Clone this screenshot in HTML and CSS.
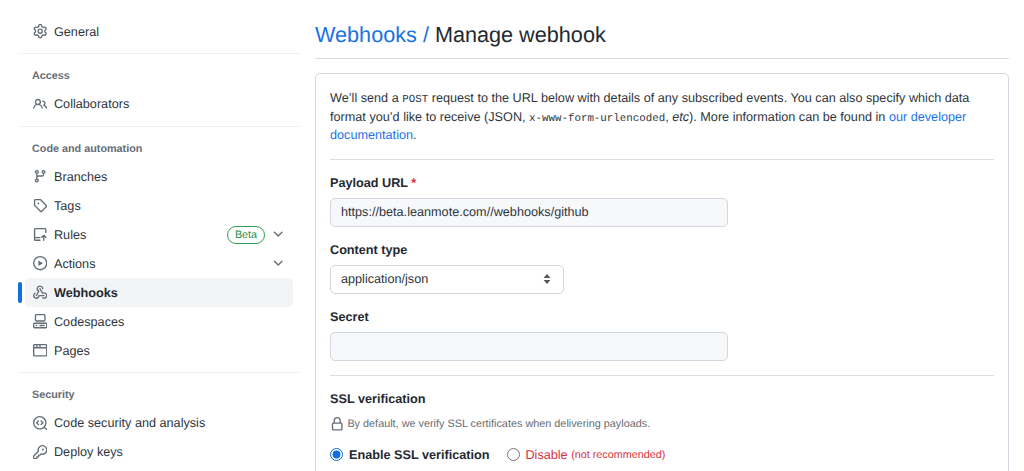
FILE: index.html
```html
<!DOCTYPE html>
<html lang="en">
<head>
<meta charset="utf-8">
<title>Manage webhook</title>
<link rel="stylesheet" href="styles.css">
</head>
<body>
<div class="page">
  <nav class="sidebar">
    <a class="item"><svg class="icon" viewBox="0 0 16 16"><path d="M8 0a8.2 8.2 0 0 1 .701.031C9.444.095 9.99.645 10.16 1.29l.288 1.107c.018.066.079.158.212.224.231.114.454.243.668.386.123.082.233.09.299.071l1.103-.303c.644-.176 1.392.021 1.82.63.27.385.506.792.704 1.218.315.675.111 1.422-.364 1.891l-.814.806c-.049.048-.098.147-.088.294.016.257.016.515 0 .772-.01.147.038.246.088.294l.814.806c.475.469.679 1.216.364 1.891a7.977 7.977 0 0 1-.704 1.217c-.428.61-1.176.807-1.82.63l-1.102-.302c-.067-.019-.177-.011-.3.071a5.909 5.909 0 0 1-.668.386c-.133.066-.194.158-.211.224l-.29 1.106c-.168.646-.715 1.196-1.458 1.26a8.006 8.006 0 0 1-1.402 0c-.743-.064-1.289-.614-1.458-1.26l-.289-1.106c-.018-.066-.079-.158-.212-.224a5.738 5.738 0 0 1-.668-.386c-.123-.082-.233-.09-.299-.071l-1.103.303c-.644.176-1.392-.021-1.82-.63a8.12 8.12 0 0 1-.704-1.218c-.315-.675-.111-1.422.363-1.891l.815-.806c.05-.048.098-.147.088-.294a6.214 6.214 0 0 1 0-.772c.01-.147-.038-.246-.088-.294l-.815-.806C.635 6.045.431 5.298.746 4.623a7.92 7.92 0 0 1 .704-1.217c.428-.61 1.176-.807 1.82-.63l1.102.302c.067.019.177.011.3-.071.214-.143.437-.272.668-.386.133-.066.194-.158.211-.224l.29-1.106C6.009.645 6.556.095 7.299.03 7.53.01 7.764 0 8 0Zm-.571 1.525c-.036.003-.108.036-.137.146l-.289 1.105c-.147.561-.549.967-.998 1.189-.173.086-.34.183-.5.29-.417.278-.97.423-1.529.27l-1.103-.303c-.109-.03-.175.016-.195.045-.22.312-.412.644-.573.99-.014.031-.021.11.059.19l.815.806c.411.406.562.957.53 1.456a4.709 4.709 0 0 0 0 .582c.032.499-.119 1.05-.53 1.456l-.815.806c-.081.08-.073.159-.059.19.162.346.353.677.573.989.02.03.085.076.195.046l1.102-.303c.56-.153 1.113-.008 1.53.27.161.107.328.204.501.29.447.222.85.629.997 1.189l.289 1.105c.029.109.101.143.137.146a6.6 6.6 0 0 0 1.142 0c.036-.003.108-.036.137-.146l.289-1.105c.147-.561.549-.967.998-1.189.173-.086.34-.183.5-.29.417-.278.97-.423 1.529-.27l1.103.303c.109.029.175-.016.195-.045.22-.313.411-.644.573-.99.014-.031.021-.11-.059-.19l-.815-.806c-.411-.406-.562-.957-.53-1.456a4.709 4.709 0 0 0 0-.582c-.032-.499.119-1.05.53-1.456l.815-.806c.081-.08.073-.159.059-.19a6.464 6.464 0 0 0-.573-.989c-.02-.03-.085-.076-.195-.046l-1.102.303c-.56.153-1.113.008-1.53-.27a4.44 4.44 0 0 0-.501-.29c-.447-.222-.85-.629-.997-1.189l-.289-1.105c-.029-.11-.101-.143-.137-.146a6.6 6.6 0 0 0-1.142 0ZM11 8a3 3 0 1 1-6 0 3 3 0 0 1 6 0ZM9.5 8a1.5 1.5 0 1 0-3.001.001A1.5 1.5 0 0 0 9.5 8Z"/></svg><span>General</span></a>
    <hr class="rule">
    <h3 class="group">Access</h3>
    <a class="item"><svg class="icon" viewBox="0 0 16 16"><path d="M2 5.5a3.5 3.5 0 1 1 5.898 2.549 5.508 5.508 0 0 1 3.034 4.084.75.75 0 1 1-1.482.235 4 4 0 0 0-7.9 0 .75.75 0 0 1-1.482-.236A5.507 5.507 0 0 1 3.102 8.05 3.493 3.493 0 0 1 2 5.5ZM11 4a3.001 3.001 0 0 1 2.22 5.018 5.01 5.01 0 0 1 2.56 3.012.749.749 0 0 1-.885.954.752.752 0 0 1-.549-.514 3.507 3.507 0 0 0-2.522-2.372.75.75 0 0 1-.574-.73v-.352a.75.75 0 0 1 .416-.672A1.5 1.5 0 0 0 11 5.5.75.75 0 0 1 11 4Zm-5.5-.5a2 2 0 1 0-.001 3.999A2 2 0 0 0 5.5 3.5Z"/></svg><span>Collaborators</span></a>
    <hr class="rule">
    <h3 class="group">Code and automation</h3>
    <a class="item"><svg class="icon" viewBox="0 0 16 16"><path d="M9.5 3.25a2.25 2.25 0 1 1 3 2.122V6A2.5 2.5 0 0 1 10 8.5H6a1 1 0 0 0-1 1v1.128a2.251 2.251 0 1 1-1.5 0V5.372a2.25 2.25 0 1 1 1.5 0v1.836A2.493 2.493 0 0 1 6 7h4a1 1 0 0 0 1-1v-.628A2.25 2.25 0 0 1 9.5 3.25Zm-6 0a.75.75 0 1 0 1.5 0 .75.75 0 0 0-1.5 0Zm8.25-.75a.75.75 0 1 0 0 1.5.75.75 0 0 0 0-1.5ZM4.25 12a.75.75 0 1 0 0 1.5.75.75 0 0 0 0-1.5Z"/></svg><span>Branches</span></a>
    <a class="item"><svg class="icon" viewBox="0 0 16 16"><path d="M1 7.775V2.75C1 1.784 1.784 1 2.75 1h5.025c.464 0 .91.184 1.238.513l6.25 6.25a1.75 1.75 0 0 1 0 2.474l-5.026 5.026a1.75 1.75 0 0 1-2.474 0l-6.25-6.25A1.75 1.75 0 0 1 1 7.775Zm1.5 0c0 .066.026.13.073.177l6.25 6.25a.25.25 0 0 0 .354 0l5.025-5.025a.25.25 0 0 0 0-.354l-6.25-6.25a.25.25 0 0 0-.177-.073H2.75a.25.25 0 0 0-.25.25ZM6 5a1 1 0 1 1 0 2 1 1 0 0 1 0-2Z"/></svg><span>Tags</span></a>
    <a class="item"><svg class="icon" viewBox="0 0 16 16"><path d="M1 2.75C1 1.784 1.784 1 2.75 1h10.5c.966 0 1.75.784 1.75 1.75v3.5a.75.75 0 0 1-1.5 0v-3.5a.25.25 0 0 0-.25-.25H2.5v8.5h5.25a.75.75 0 0 1 0 1.5H2.5v1.25c0 .138.112.25.25.25h5a.75.75 0 0 1 0 1.5h-5A1.75 1.75 0 0 1 1 13.25Z"/><path d="M12 8.5a.75.75 0 0 1 .53.22l2.25 2.25a.75.75 0 0 1-1.06 1.06l-.97-.97v3.69a.75.75 0 0 1-1.5 0v-3.69l-.97.97a.75.75 0 0 1-1.06-1.06l2.25-2.25A.75.75 0 0 1 12 8.5Z"/></svg><span>Rules</span><span class="badge">Beta</span><svg class="chev" viewBox="0 0 16 16"><path d="M12.78 5.22a.749.749 0 0 1 0 1.06l-4.25 4.25a.749.749 0 0 1-1.06 0L3.22 6.28a.749.749 0 1 1 1.06-1.06L8 8.939l3.72-3.719a.749.749 0 0 1 1.06 0Z"/></svg></a>
    <a class="item"><svg class="icon" viewBox="0 0 16 16"><path d="M8 0a8 8 0 1 1 0 16A8 8 0 0 1 8 0ZM1.5 8a6.5 6.5 0 1 0 13 0 6.5 6.5 0 0 0-13 0Zm4.879-2.773 4.264 2.559a.25.25 0 0 1 0 .428l-4.264 2.559A.25.25 0 0 1 6 10.559V5.442a.25.25 0 0 1 .379-.215Z"/></svg><span>Actions</span><svg class="chev push" viewBox="0 0 16 16"><path d="M12.78 5.22a.749.749 0 0 1 0 1.06l-4.25 4.25a.749.749 0 0 1-1.06 0L3.22 6.28a.749.749 0 1 1 1.06-1.06L8 8.939l3.72-3.719a.749.749 0 0 1 1.06 0Z"/></svg></a>
    <a class="item active"><svg class="icon" viewBox="0 0 16 16"><path d="M5.5 4.25a2.25 2.25 0 0 1 4.5 0 .75.75 0 0 0 1.5 0 3.75 3.75 0 1 0-6.14 2.889l-2.272 4.258a.75.75 0 0 0 1.324.706L7 7.25a.75.75 0 0 0-.309-1.015A2.25 2.25 0 0 1 5.5 4.25Z"/><path d="M7.364 3.607a.75.75 0 0 1 1.03.257l2.608 4.349a3.75 3.75 0 1 1-.628 6.785.75.75 0 0 1 .752-1.299 2.25 2.25 0 1 0-.033-3.88.75.75 0 0 1-1.03-.256L7.107 4.636a.75.75 0 0 1 .257-1.03Z"/><path d="M2.9 8.776A.75.75 0 0 1 2.625 9.8 2.25 2.25 0 1 0 6 11.75a.75.75 0 0 1 .75-.751h5.5a.75.75 0 0 1 0 1.5H7.425a3.751 3.751 0 1 1-5.55-3.998.75.75 0 0 1 1.024.274Z"/></svg><span>Webhooks</span></a>
    <a class="item"><svg class="icon" viewBox="0 0 16 16"><path d="M0 11.25c0-.966.784-1.75 1.75-1.75h12.5c.966 0 1.75.784 1.75 1.75v3A1.75 1.75 0 0 1 14.25 16H1.75A1.75 1.75 0 0 1 0 14.25Zm2-9.5C2 .784 2.784 0 3.75 0h8.5C13.216 0 14 .784 14 1.75v5a1.75 1.75 0 0 1-1.75 1.75h-8.5A1.75 1.75 0 0 1 2 6.75Zm1.75-.25a.25.25 0 0 0-.25.25v5c0 .138.112.25.25.25h8.5a.25.25 0 0 0 .25-.25v-5a.25.25 0 0 0-.25-.25Zm-2 9.5a.25.25 0 0 0-.25.25v3c0 .138.112.25.25.25h12.5a.25.25 0 0 0 .25-.25v-3a.25.25 0 0 0-.25-.25Z"/><path d="M7 12.75a.75.75 0 0 1 .75-.75h4.5a.75.75 0 0 1 0 1.5h-4.5a.75.75 0 0 1-.75-.75Zm-4 0a.75.75 0 0 1 .75-.75h.5a.75.75 0 0 1 0 1.5h-.5a.75.75 0 0 1-.75-.75Z"/></svg><span>Codespaces</span></a>
    <a class="item"><svg class="icon" viewBox="0 0 16 16"><path d="M0 2.75C0 1.784.784 1 1.75 1h12.5c.966 0 1.75.784 1.75 1.75v10.5A1.75 1.75 0 0 1 14.25 15H1.75A1.75 1.75 0 0 1 0 13.25ZM14.5 6h-13v7.25c0 .138.112.25.25.25h12.5a.25.25 0 0 0 .25-.25Zm-6-3.5v2h6V2.75a.25.25 0 0 0-.25-.25ZM5 2.5v2h2v-2Zm-3.25 0a.25.25 0 0 0-.25.25V4.5h2v-2Z"/></svg><span>Pages</span></a>
    <hr class="rule">
    <h3 class="group">Security</h3>
    <a class="item"><svg class="icon" viewBox="0 0 16 16"><path d="M8.47 4.97a.75.75 0 0 0 0 1.06L9.94 7.5 8.47 8.97a.75.75 0 1 0 1.06 1.06l2-2a.75.75 0 0 0 0-1.06l-2-2a.75.75 0 0 0-1.06 0ZM6.53 6.03a.75.75 0 0 0-1.06-1.06l-2 2a.75.75 0 0 0 0 1.06l2 2a.75.75 0 1 0 1.06-1.06L5.06 7.5l1.47-1.47Z"/><path d="M12.246 13.307a7.501 7.501 0 1 1 1.06-1.06l2.474 2.473a.749.749 0 0 1-.326 1.275.749.749 0 0 1-.734-.215ZM1.5 7.5a6.002 6.002 0 0 0 3.608 5.504 6.002 6.002 0 0 0 6.486-1.117.748.748 0 0 1 .292-.293A6 6 0 1 0 1.5 7.5Z"/></svg><span>Code security and analysis</span></a>
    <a class="item"><svg class="icon" viewBox="0 0 16 16"><path d="M10.5 0a5.499 5.499 0 1 1-1.288 10.848l-.932.932a.749.749 0 0 1-.53.22H7v.75a.749.749 0 0 1-.22.53l-.5.5a.749.749 0 0 1-.53.22H5v.75a.749.749 0 0 1-.22.53l-.5.5a.749.749 0 0 1-.53.22h-2A1.75 1.75 0 0 1 0 14.25v-2c0-.199.079-.389.22-.53l4.932-4.932A5.5 5.5 0 0 1 10.5 0Zm-4 5.5c-.001.431.069.86.205 1.269a.75.75 0 0 1-.181.768L1.5 12.56v1.69c0 .138.112.25.25.25h1.69l.06-.06v-1.19a.75.75 0 0 1 .75-.75h1.19l.06-.06v-1.19a.75.75 0 0 1 .75-.75h1.19l1.023-1.025a.75.75 0 0 1 .768-.18A4 4 0 1 0 6.5 5.5ZM11 6a1 1 0 1 1 0-2 1 1 0 0 1 0 2Z"/></svg><span>Deploy keys</span></a>
  </nav>
  <main class="main">
    <h2 class="title"><a class="link">Webhooks</a> <span class="link">/</span> Manage webhook</h2>
    <section class="box">
      <p class="intro">We’ll send a <code>POST</code> request to the URL below with details of any subscribed events. You can also specify which data format you’d like to receive (JSON, <code>x-www-form-urlencoded</code>, <em>etc</em>). More information can be found in <a class="link">our developer documentation</a>.</p>
      <hr class="line">
      <label class="label">Payload URL <span class="req">*</span></label>
      <input class="field wide" type="text" value="https://beta.leanmote.com//webhooks/github">
      <label class="label">Content type</label>
      <select class="field select"><option>application/json</option></select>
      <label class="label">Secret</label>
      <input class="field wide" type="text">
      <hr class="line">
      <div class="label ssl">SSL verification</div>
      <p class="hint"><svg class="lock" viewBox="0 0 16 16"><path d="M4 4a4 4 0 0 1 8 0v2h.25c.966 0 1.75.784 1.75 1.75v5.5A1.75 1.75 0 0 1 12.25 15h-8.5A1.75 1.75 0 0 1 2 13.25v-5.5C2 6.784 2.784 6 3.75 6H4Zm8.25 3.5h-8.5a.25.25 0 0 0-.25.25v5.5c0 .138.112.25.25.25h8.5a.25.25 0 0 0 .25-.25v-5.5a.25.25 0 0 0-.25-.25ZM10.5 6V4a2.5 2.5 0 1 0-5 0v2Z"/></svg>By default, we verify SSL certificates when delivering payloads.</p>
      <div class="radios">
        <label class="radio on"><input type="radio" name="ssl" checked>Enable SSL verification</label>
        <label class="radio off"><input type="radio" name="ssl">Disable <small>(not recommended)</small></label>
      </div>
    </section>
  </main>
</div>
</body>
</html>
```
FILE: styles.css
```css
html, body { margin: 0; height: 471px; overflow: hidden; background: #fff; }
body { font-family: "Liberation Sans", Arial, sans-serif; font-size: 12.66px; color: #24292f; text-rendering: geometricPrecision; }
.page { display: flex; align-items: flex-start; padding: 0 15px 0 18px; }

.sidebar { width: 282px; flex: none; padding-top: 17px; }
.item { display: flex; align-items: center; height: 29px; margin-left: 7px; width: 268px; padding-left: 8px; box-sizing: border-box; border-radius: 5px; color: #2f363d; position: relative; }
.icon { width: 14.4px; height: 14.4px; margin-right: 6.6px; fill: #656d76; flex: none; }
.active { background: #f3f4f6; font-weight: 700; color: #24292f; }
.active::before { content: ""; position: absolute; left: -7px; top: 4px; width: 3.6px; height: 21px; border-radius: 3px; background: #0f6fe0; }
.rule { border: 0; height: 1px; background: #eff1f3; margin: 7px 0; }
.group { margin: 0 0 0 14px; height: 28.5px; line-height: 30px; font-size: 10.8px; font-weight: 700; color: #656d76; }
.badge { margin-left: auto; height: 18px; line-height: 16px; box-sizing: border-box; padding: 0 6.5px; border: 1px solid #2f9e55; border-radius: 9px; font-size: 10.8px; font-weight: 400; color: #2a8f4a; }
.chev { width: 14.4px; height: 14.4px; fill: #656d76; margin: 0 8px 0 6px; flex: none; position: relative; top: -0.5px; }
.push { margin-left: auto; }

.main { flex: 1; margin-left: 15px; }
.title { margin: 0; height: 58px; line-height: 69px; font-size: 21.65px; font-weight: 400; border-bottom: 1px solid #d8dee4; color: #24292f; }
.link { color: #1a73e3; }
.box { margin-top: 14px; height: 500px; border: 1px solid #d0d7de; border-radius: 5px; padding: 15px 14px 14px; box-sizing: border-box; }
.intro { margin: 0; line-height: 18.6px; color: #2f363d; }
code { font-family: "Liberation Mono", monospace; font-size: 10.8px; line-height: 1; }
em { font-style: italic; }
.line { border: 0; height: 1px; background: #d8dee4; margin: 14px 0 0; }
.field + .line { margin-top: 13px; }
.label { display: block; font-weight: 700; line-height: 18px; margin: 0 0 6px; color: #24292f; }
.line + .label { margin-top: 14px; }
.req { color: #d5333f; }
.field { display: block; box-sizing: border-box; height: 29px; border: 1px solid #d0d7de; border-radius: 5px; padding: 0 10px; font: 12.66px "Liberation Sans", Arial, sans-serif; text-rendering: geometricPrecision; color: #2f363d; outline: 0; margin-bottom: 14px; }
.wide { width: 398px; background: #f6f8fa; }
.select { width: 234px; background: #fff url("data:image/svg+xml;utf8,<svg xmlns='http://www.w3.org/2000/svg' width='10' height='12' viewBox='0 0 10 12'><path fill='%23555' d='M5 1l3.4 4H1.6zM5 11L1.6 7h6.8z'/></svg>") no-repeat right 11px center; appearance: none; -webkit-appearance: none; }
.hint { margin: 0; display: flex; align-items: center; font-size: 10.85px; color: #656d76; height: 18px; }
.lock { width: 14.4px; height: 14.4px; fill: #656d76; margin-right: 3px; flex: none; }
.ssl { margin-bottom: 7px; }
.radios { display: flex; align-items: center; margin-top: 13px; }
.radio { display: flex; align-items: center; line-height: 18px; }
.radio input { margin: 0 6px 0 0; width: 13px; height: 13px; accent-color: #0f6fe0; }
.on { font-weight: 700; margin-right: 18px; }
.off { color: #d5333f; }
.off input { margin-right: 5px; }
.off small { font-size: 10.8px; margin-left: 3.5px; vertical-align: -1px; }
```
